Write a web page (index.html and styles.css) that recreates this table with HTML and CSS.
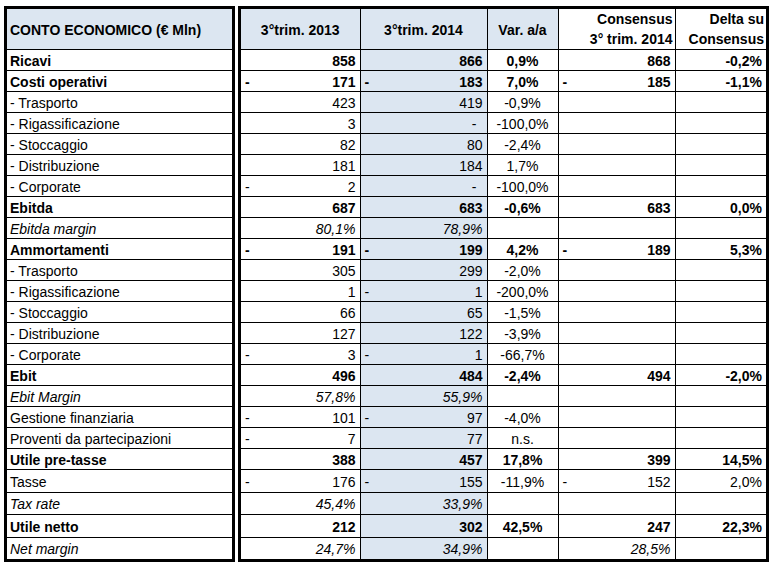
FILE: index.html
```html
<!DOCTYPE html>
<html lang="it">
<head>
<meta charset="utf-8">
<title>Conto economico</title>
<link rel="stylesheet" href="styles.css">
</head>
<body>
<div class="sheet">
  <div class="frame left">
    <table>
      <colgroup><col class="w-label"></colgroup>
      <tr class="head"><td class="lbl hb"><b>CONTO ECONOMICO (€ Mln)</b></td></tr>
      <tr class="b"><td class="lbl">Ricavi</td></tr>
      <tr class="b"><td class="lbl">Costi operativi</td></tr>
      <tr><td class="lbl">- Trasporto</td></tr>
      <tr><td class="lbl">- Rigassificazione</td></tr>
      <tr><td class="lbl">- Stoccaggio</td></tr>
      <tr><td class="lbl">- Distribuzione</td></tr>
      <tr><td class="lbl">- Corporate</td></tr>
      <tr class="b"><td class="lbl">Ebitda</td></tr>
      <tr class="i"><td class="lbl">Ebitda margin</td></tr>
      <tr class="b"><td class="lbl">Ammortamenti</td></tr>
      <tr><td class="lbl">- Trasporto</td></tr>
      <tr><td class="lbl">- Rigassificazione</td></tr>
      <tr><td class="lbl">- Stoccaggio</td></tr>
      <tr><td class="lbl">- Distribuzione</td></tr>
      <tr><td class="lbl">- Corporate</td></tr>
      <tr class="b"><td class="lbl">Ebit</td></tr>
      <tr class="i"><td class="lbl">Ebit Margin</td></tr>
      <tr><td class="lbl">Gestione finanziaria</td></tr>
      <tr><td class="lbl">Proventi da partecipazioni</td></tr>
      <tr class="b"><td class="lbl">Utile pre-tasse</td></tr>
      <tr class="tall"><td class="lbl">Tasse</td></tr>
      <tr class="i mid"><td class="lbl">Tax rate</td></tr>
      <tr class="b tall"><td class="lbl">Utile netto</td></tr>
      <tr class="i mid"><td class="lbl">Net margin</td></tr>
    </table>
  </div>
  <div class="frame right">
    <table>
      <colgroup>
        <col class="w-a"><col class="w-b"><col class="w-c"><col class="w-d"><col class="w-e">
      </colgroup>
      <tr class="head b">
        <td class="ctr blue">3°trim. 2013</td>
        <td class="ctr blue">3°trim. 2014</td>
        <td class="ctr blue">Var. a/a</td>
        <td class="num two">Consensus<br>3° trim. 2014</td>
        <td class="num two">Delta su<br>Consensus</td>
      </tr>
      <tr class="b"><td class="num">858</td><td class="num blue">866</td><td class="ctr">0,9%</td><td class="num">868</td><td class="num">-0,2%</td></tr>
      <tr class="b"><td class="num"><span class="m">-</span>171</td><td class="num blue"><span class="m">-</span>183</td><td class="ctr">7,0%</td><td class="num"><span class="m">-</span>185</td><td class="num">-1,1%</td></tr>
      <tr><td class="num">423</td><td class="num blue">419</td><td class="ctr">-0,9%</td><td></td><td></td></tr>
      <tr><td class="num">3</td><td class="num blue z">-</td><td class="ctr">-100,0%</td><td></td><td></td></tr>
      <tr><td class="num">82</td><td class="num blue">80</td><td class="ctr">-2,4%</td><td></td><td></td></tr>
      <tr><td class="num">181</td><td class="num blue">184</td><td class="ctr">1,7%</td><td></td><td></td></tr>
      <tr><td class="num"><span class="m">-</span>2</td><td class="num blue z">-</td><td class="ctr">-100,0%</td><td></td><td></td></tr>
      <tr class="b"><td class="num">687</td><td class="num blue">683</td><td class="ctr">-0,6%</td><td class="num">683</td><td class="num">0,0%</td></tr>
      <tr class="i"><td class="num">80,1%</td><td class="num blue">78,9%</td><td></td><td></td><td></td></tr>
      <tr class="b"><td class="num"><span class="m">-</span>191</td><td class="num blue"><span class="m">-</span>199</td><td class="ctr">4,2%</td><td class="num"><span class="m">-</span>189</td><td class="num">5,3%</td></tr>
      <tr><td class="num">305</td><td class="num blue">299</td><td class="ctr">-2,0%</td><td></td><td></td></tr>
      <tr><td class="num">1</td><td class="num blue"><span class="m">-</span>1</td><td class="ctr">-200,0%</td><td></td><td></td></tr>
      <tr><td class="num">66</td><td class="num blue">65</td><td class="ctr">-1,5%</td><td></td><td></td></tr>
      <tr><td class="num">127</td><td class="num blue">122</td><td class="ctr">-3,9%</td><td></td><td></td></tr>
      <tr><td class="num"><span class="m">-</span>3</td><td class="num blue"><span class="m">-</span>1</td><td class="ctr">-66,7%</td><td></td><td></td></tr>
      <tr class="b"><td class="num">496</td><td class="num blue">484</td><td class="ctr">-2,4%</td><td class="num">494</td><td class="num">-2,0%</td></tr>
      <tr class="i"><td class="num">57,8%</td><td class="num blue">55,9%</td><td></td><td></td><td></td></tr>
      <tr><td class="num"><span class="m">-</span>101</td><td class="num blue"><span class="m">-</span>97</td><td class="ctr">-4,0%</td><td></td><td></td></tr>
      <tr><td class="num"><span class="m">-</span>7</td><td class="num blue">77</td><td class="ctr">n.s.</td><td></td><td></td></tr>
      <tr class="b"><td class="num">388</td><td class="num blue">457</td><td class="ctr">17,8%</td><td class="num">399</td><td class="num">14,5%</td></tr>
      <tr class="tall"><td class="num"><span class="m">-</span>176</td><td class="num blue"><span class="m">-</span>155</td><td class="ctr">-11,9%</td><td class="num"><span class="m">-</span>152</td><td class="num">2,0%</td></tr>
      <tr class="i mid"><td class="num">45,4%</td><td class="num blue">33,9%</td><td></td><td></td><td></td></tr>
      <tr class="b tall"><td class="num">212</td><td class="num blue">302</td><td class="ctr">42,5%</td><td class="num">247</td><td class="num">22,3%</td></tr>
      <tr class="i mid"><td class="num">24,7%</td><td class="num blue">34,9%</td><td></td><td class="num">28,5%</td><td></td></tr>
    </table>
  </div>
</div>
</body>
</html>
```

FILE: styles.css
```css
html, body {
  margin: 0;
  padding: 0;
  background: #fff;
}

body {
  font-family: "Liberation Sans", Arial, sans-serif;
  font-size: 14px;
  color: #000;
}

.sheet {
  display: flex;
  gap: 3px;
  padding: 6px 0 0 4px;
  align-items: flex-start;
}

.frame {
  border: 3px solid #000;
}

.left { width: 225px; }
.right { width: 525px; }

table {
  border-collapse: collapse;
  table-layout: fixed;
  width: 100%;
}

.w-label { width: 225px; }
.w-a { width: 119px; }
.w-b { width: 127px; }
.w-c { width: 71px; }
.w-d { width: 117px; }
.w-e { width: 91px; }

td {
  border: 1px solid #000;
  padding: 1px 3px 0;
  height: 19px;
  line-height: 16px;
  vertical-align: middle;
  white-space: nowrap;
  overflow: hidden;
}

tr:first-child td { border-top: 0; }
tr:last-child td { border-bottom: 0; }
td:first-child { border-left: 0; }
td:last-child { border-right: 0; }

tr.head td {
  height: 39px;
  background: #dce6f1;
}

tr.head td.two {
  background: #fff;
  height: 40px;
  line-height: 20px;
  padding: 0 2px 0 3px;
}

tr.tall td { height: 21px; }
tr.mid td { height: 20px; }

.b td { font-weight: bold; }
.i td { font-style: italic; }

.lbl { text-align: left; }

.num {
  text-align: right;
  padding-right: 4px;
}

.ctr { text-align: center; }

.blue { background: #dce6f1; }

.m {
  float: left;
  padding-left: 1px;
}

.z { padding-right: 10px; }
```
